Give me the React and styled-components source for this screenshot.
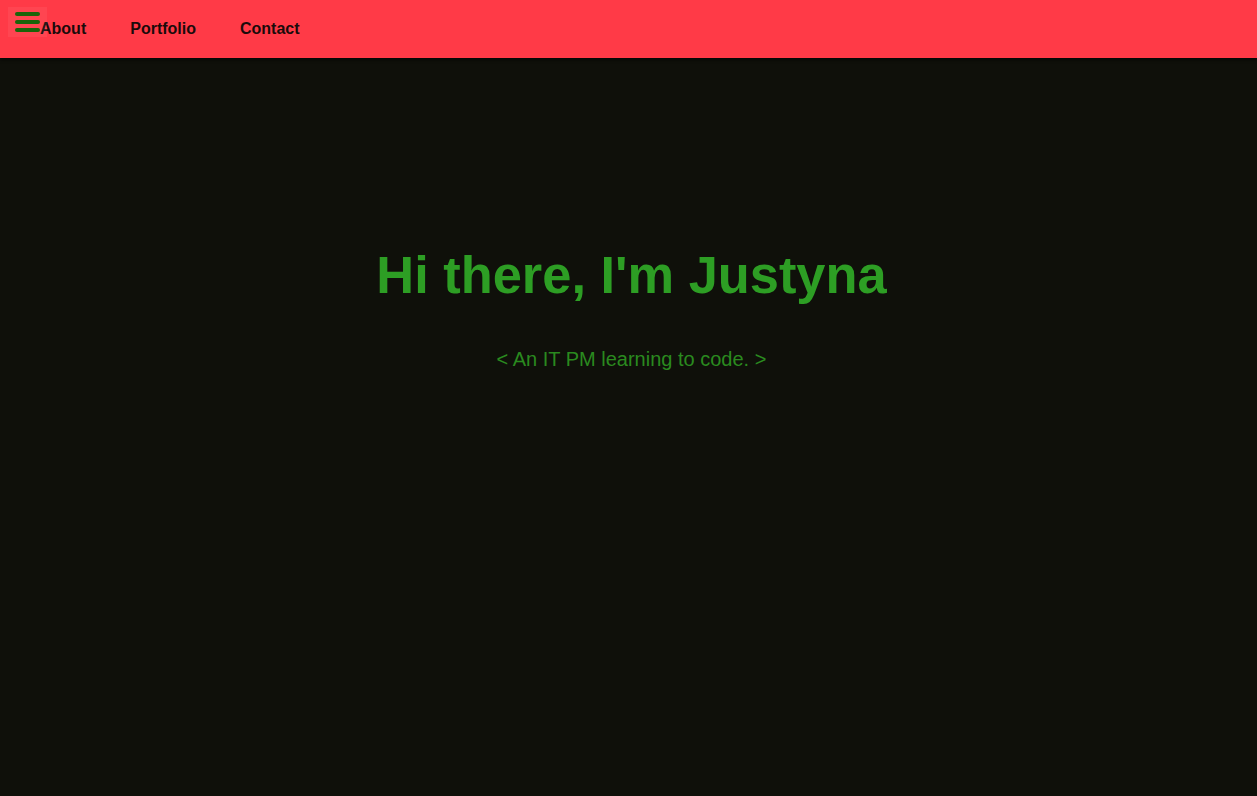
import React from 'react';
import styled, { createGlobalStyle } from 'styled-components';

const GlobalStyle = createGlobalStyle`
  html, body {
    margin: 0;
    padding: 0;
    background: #0f100a;
    font-family: "Liberation Sans", Arial, sans-serif;
  }
`;

const Page = styled.div`
  min-height: 796px;
  background: #0f100a;
  display: flex;
  flex-direction: column;
`;

const NavBar = styled.header`
  height: 58px;
  background: #ff3a47;
  display: flex;
  align-items: center;
  position: relative;
  box-shadow: 0 2px 3px rgba(0, 0, 0, 0.6);
  z-index: 1;
`;

const MenuButton = styled.button`
  position: absolute;
  left: 8px;
  top: 7px;
  width: 39px;
  height: 30px;
  padding: 0;
  border: none;
  background: rgba(255, 255, 255, 0.06);
  display: flex;
  flex-direction: column;
  align-items: center;
  justify-content: center;
  gap: 3.5px;
  cursor: pointer;
`;

const Bar = styled.span`
  display: block;
  width: 25px;
  height: 4.5px;
  border-radius: 2px;
  background: #1a6409;
  margin-left: -1px;
`;

const NavList = styled.nav`
  display: flex;
  gap: 44px;
  padding-left: 40px;
  margin-top: -1px;
`;

const NavLink = styled.a`
  font-size: 16px;
  font-weight: 700;
  color: #1a0b0b;
  text-decoration: none;
`;

const Hero = styled.main`
  flex: 1;
  display: flex;
  flex-direction: column;
  align-items: center;
  padding-top: 187px;
  padding-left: 6px;
`;

const Title = styled.h1`
  margin: 0;
  font-size: 52.4px;
  font-weight: 700;
  color: #2d9e24;
  line-height: 60px;
`;

const Subtitle = styled.p`
  margin: 42px 0 0;
  font-size: 20px;
  color: #2a8a1f;
  line-height: 24px;
`;

export default function App() {
  return (
    <Page>
      <GlobalStyle />
      <NavBar>
        <NavList>
          <NavLink href="#about">About</NavLink>
          <NavLink href="#portfolio">Portfolio</NavLink>
          <NavLink href="#contact">Contact</NavLink>
        </NavList>
        <MenuButton aria-label="menu">
          <Bar />
          <Bar />
          <Bar />
        </MenuButton>
      </NavBar>
      <Hero>
        <Title>Hi there, I'm Justyna</Title>
        <Subtitle>&lt; An IT PM learning to code. &gt;</Subtitle>
      </Hero>
    </Page>
  );
}
